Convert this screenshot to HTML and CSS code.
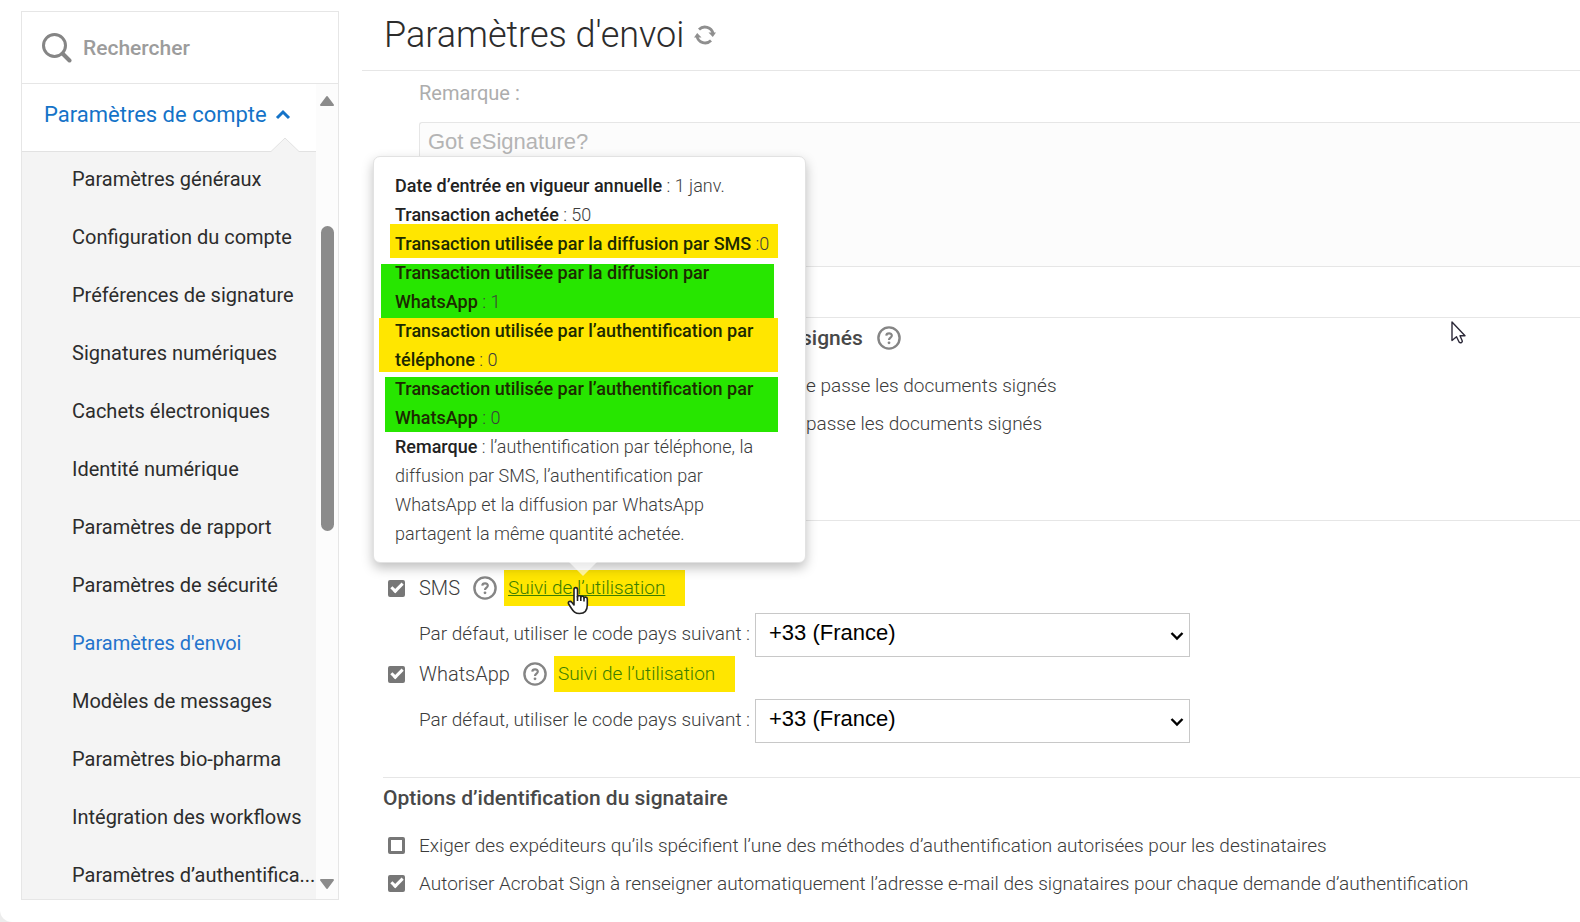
FILE: index.html
```
<!DOCTYPE html>
<html lang="fr">
<head>
    <meta charset="UTF-8">
    <title>Paramètres d'envoi</title>
    <meta name="viewport" content="width=device-width, initial-scale=1.0">
    <link rel="stylesheet" href="styles.css">
</head>
<body>

    <!-- Sidebar -->
    <aside class="sidebar">
        <div class="search">
            <svg class="search-icon" viewBox="0 0 30 30" width="30" height="30">
                <circle cx="12.500" cy="12.500" r="11" fill="none" stroke="#858585" stroke-width="3"/>
                <path d="M20.500 20.500L27.500 27.500" stroke="#858585" stroke-width="4" stroke-linecap="round"/>
            </svg>
            <input type="search" aria-label="Rechercher" placeholder="Rechercher">
        </div>
        <div class="menu">
            <nav class="menu-list">
                <button type="button" class="menu-head">
                    Paramètres de compte
                    <svg viewBox="0 0 16 11" width="16" height="11">
                        <path d="M2 9L8 3L14 9" fill="none" stroke="#1473c8" stroke-width="3"/>
                    </svg>
                    <svg class="notch" viewBox="0 0 28 16" width="28" height="16">
                        <path d="M0 14.500L14 1L28 14.500V16H0Z" fill="#f4f4f4"/>
                        <path d="M0 14.500L14 1L28 14.500" fill="none" stroke="#e2e2e2"/>
                    </svg>
                </button>
                <ul>
                    <li><a href="#">Paramètres généraux</a></li>
                    <li><a href="#">Configuration du compte</a></li>
                    <li><a href="#">Préférences de signature</a></li>
                    <li><a href="#">Signatures numériques</a></li>
                    <li><a href="#">Cachets électroniques</a></li>
                    <li><a href="#">Identité numérique</a></li>
                    <li><a href="#">Paramètres de rapport</a></li>
                    <li><a href="#">Paramètres de sécurité</a></li>
                    <li><a href="#" class="active">Paramètres d'envoi</a></li>
                    <li><a href="#">Modèles de messages</a></li>
                    <li><a href="#">Paramètres bio-pharma</a></li>
                    <li><a href="#">Intégration des workflows</a></li>
                    <li><a href="#">Paramètres d’authentifica...</a></li>
                </ul>
            </nav>
            <div class="scrollbar">
                <svg viewBox="0 0 16 12" width="16" height="12">
                    <path d="M8 2L14 10H2Z" fill="#8b8b8b" stroke="#8b8b8b" stroke-width="2" stroke-linejoin="round"/>
                </svg>
                <div class="track-top"></div>
                <div class="thumb"></div>
                <div class="track-bottom"></div>
                <svg viewBox="0 0 16 12" width="16" height="12">
                    <path d="M8 10L14 2H2Z" fill="#8b8b8b" stroke="#8b8b8b" stroke-width="2" stroke-linejoin="round"/>
                </svg>
            </div>
        </div>
    </aside>

    <!-- Main settings -->
    <main class="content">
        <header class="page-head">
            <h1>Paramètres d'envoi</h1>
            <button type="button" class="refresh" aria-label="Actualiser">
                <svg viewBox="0 0 22 22" width="22" height="22">
                    <path d="M5 5.500A8.300 8.300 0 0 1 19 9.500M17 16.500A8.300 8.300 0 0 1 3 12.500" fill="none" stroke="#8f8f8f" stroke-width="2.800"/>
                    <path d="M14.500 8.500H22L18.800 13Z M7.500 13.500H0L3.200 9Z" fill="#8f8f8f"/>
                </svg>
            </button>
        </header>

        <section class="note">
            <label for="note-text">Remarque :</label>
            <textarea id="note-text" disabled>Got eSignature?</textarea>
        </section>

        <section class="section protect">
            <h2>signés
                <svg class="help" viewBox="0 0 24 24" width="24" height="24">
                    <circle cx="12" cy="12" r="10.600" fill="none" stroke="#858585" stroke-width="2.400"/>
                    <path d="M9.300 9.600C9.400 6.500 14.900 6.500 14.800 9.700C14.700 11.500 12 11.700 12 14" fill="none" stroke="#858585" stroke-width="2.200"/>
                    <circle cx="12" cy="16.800" r="1.400" fill="#858585"/>
                </svg>
            </h2>
            <p class="row">e passe les documents signés</p>
            <p class="row">passe les documents signés</p>
        </section>

        <section class="section delivery">
            <div class="channel">
                <input type="checkbox" id="sms" checked>
                <label for="sms">SMS</label>
                <svg class="help" viewBox="0 0 24 24" width="24" height="24">
                    <circle cx="12" cy="12" r="10.600" fill="none" stroke="#858585" stroke-width="2.400"/>
                    <path d="M9.300 9.600C9.400 6.500 14.900 6.500 14.800 9.700C14.700 11.500 12 11.700 12 14" fill="none" stroke="#858585" stroke-width="2.200"/>
                    <circle cx="12" cy="16.800" r="1.400" fill="#858585"/>
                </svg>
                <div class="usage">
                    <a href="#" class="usage-link hover">Suivi de l’utilisation</a>
                    <svg class="hand" viewBox="0 0 22 29" width="22" height="29">
                        <path d="M7 17V3.500C7 1 10.500 1 10.500 3.500V11C10.500 9 13.800 9 13.800 11.300C13.800 9.700 17 9.700 17 12C17 10.600 20.300 10.800 20.300 13V19C20.300 24 18 27.500 12.500 27.500C8 27.500 6.500 25.500 4.500 22.500L1.500 17.800C0.500 15.500 3.500 14.500 4.800 16.300L7 19Z" fill="#fff" stroke="#222" stroke-width="1.600" stroke-linejoin="round"/>
                        <path d="M10.500 10V15M13.800 11V15M17 12V15.500" stroke="#222" stroke-width="1.600"/>
                    </svg>
                    <div class="tooltip" role="tooltip">
                        <p><b>Date d’entrée en vigueur annuelle</b> : 1 janv.</p>
                        <p><b>Transaction achetée</b> : 50</p>
                        <p class="mark yellow first"><b>Transaction utilisée par la diffusion par SMS</b> :0</p>
                        <p class="mark green"><b>Transaction utilisée par la diffusion par<br>WhatsApp</b> : 1</p>
                        <p class="mark yellow"><b>Transaction utilisée par l’authentification par<br>téléphone</b> : 0</p>
                        <p class="mark green last"><b>Transaction utilisée par l’authentification par<br>WhatsApp</b> : 0</p>
                        <p><b>Remarque</b> : l’authentification par téléphone, la<br>diffusion par SMS, l’authentification par<br>WhatsApp et la diffusion par WhatsApp<br>partagent la même quantité achetée.</p>
                    </div>
                </div>
            </div>
            <div class="country">
                <label for="sms-code">Par défaut, utiliser le code pays suivant :</label>
                <div class="select">
                    <select id="sms-code"><option>+33 (France)</option></select>
                    <svg viewBox="0 0 14 10" width="14" height="10"><path d="M1.500 2L7 7.500L12.500 2" fill="none" stroke="#000" stroke-width="2.400"/></svg>
                </div>
            </div>
            <div class="channel">
                <input type="checkbox" id="whatsapp" checked>
                <label for="whatsapp">WhatsApp</label>
                <svg class="help" viewBox="0 0 24 24" width="24" height="24">
                    <circle cx="12" cy="12" r="10.600" fill="none" stroke="#858585" stroke-width="2.400"/>
                    <path d="M9.300 9.600C9.400 6.500 14.900 6.500 14.800 9.700C14.700 11.500 12 11.700 12 14" fill="none" stroke="#858585" stroke-width="2.200"/>
                    <circle cx="12" cy="16.800" r="1.400" fill="#858585"/>
                </svg>
                <div class="usage">
                    <a href="#" class="usage-link">Suivi de l’utilisation</a>
                </div>
            </div>
            <div class="country">
                <label for="whatsapp-code">Par défaut, utiliser le code pays suivant :</label>
                <div class="select">
                    <select id="whatsapp-code"><option>+33 (France)</option></select>
                    <svg viewBox="0 0 14 10" width="14" height="10"><path d="M1.500 2L7 7.500L12.500 2" fill="none" stroke="#000" stroke-width="2.400"/></svg>
                </div>
            </div>
        </section>

        <section class="section">
            <h2>Options d’identification du signataire</h2>
            <div class="row">
                <input type="checkbox" id="require">
                <label for="require">Exiger des expéditeurs qu’ils spécifient l’une des méthodes d’authentification autorisées pour les destinataires</label>
            </div>
            <div class="row">
                <input type="checkbox" id="autofill" checked>
                <label for="autofill">Autoriser Acrobat Sign à renseigner automatiquement l’adresse e-mail des signataires pour chaque demande d’authentification</label>
            </div>
        </section>

        <svg class="pointer" viewBox="0 0 15 23" width="15" height="23">
            <path d="M1 1V19.500L5.500 15.800L8.200 21.200C9.500 22.500 11.800 21.300 11.200 19.700L9 14.800H14Z" fill="#fff" stroke="#2b2838" stroke-width="1.400" stroke-linejoin="round"/>
        </svg>
    </main>

</body>
</html>
```
FILE: styles.css
```
/* General Styles */
*, *::after {
    box-sizing: border-box;
}

html {
    background-color: #ececec;
}

body {
    margin: 0;
    height: 100vh;
    display: flex;
    overflow: hidden;
    background-color: white;
    border-bottom-left-radius: 12px;
    font-family: Roboto, "Open Sans", sans-serif;
    font-size: 19px;
    font-weight: 300;
    color: #3c3c3c;
}

h1, h2, p, ul {
    margin: 0;
    padding: 0;
    font-weight: inherit;
}

a {
    text-decoration: none;
}

button {
    padding: 0;
    border: none;
    background: none;
    font-family: inherit;
    cursor: pointer;
}

svg {
    display: block;
    flex: none;
}

/* Sidebar */
.sidebar {
    flex: none;
    display: flex;
    flex-direction: column;
    width: 318px;
    margin: 11px 23px 22px 21px;
    border: 1px solid #e6e6e6;
}

.search {
    flex: none;
    display: flex;
    align-items: center;
    gap: 11px;
    height: 72px;
    padding: 0 20px;
    border-bottom: 1px solid #e6e6e6;
}

.search input {
    flex: 1;
    min-width: 0;
    padding: 0;
    border: none;
    outline: none;
    font-family: inherit;
    font-size: 21px;
    font-weight: 500;
}

.search input::placeholder {
    color: #9c9c9c;
}

.menu {
    flex: 1;
    min-height: 0;
    display: flex;
}

.menu-list {
    flex: 1;
    overflow: hidden;
    background-color: #f4f4f4;
}

.menu-head {
    position: relative;
    display: flex;
    align-items: center;
    gap: 8px;
    width: 100%;
    height: 68px;
    padding: 0 0 6px 22px;
    border-bottom: 1px solid #e2e2e2;
    background-color: white;
    color: #1473c8;
    font-size: 22px;
    font-weight: 400;
}

.notch {
    position: absolute;
    right: 17px;
    bottom: -2px;
}

.menu-list ul {
    list-style: none;
}

.menu-list a {
    display: block;
    padding: 0 0 4px 50px;
    line-height: 54px;
    font-size: 20px;
    font-weight: 400;
    white-space: nowrap;
    color: #2c2c2c;
}

.menu-list a.active {
    color: #2473cc;
}

.scrollbar {
    flex: none;
    display: flex;
    flex-direction: column;
    align-items: center;
    width: 22px;
    padding: 11px 0 9px;
    background-color: #fcfcfc;
}

.track-top {
    flex: 119;
}

.thumb {
    flex: 304;
    width: 13px;
    border-radius: 7px;
    background-color: #8b8b8b;
}

.track-bottom {
    flex: 347;
}

/* Main column */
.content {
    position: relative;
    flex: 1;
    min-width: 0;
}

.page-head {
    display: flex;
    align-items: center;
    gap: 10px;
    height: 71px;
    padding-left: 22px;
    border-bottom: 1px solid #e6e6e6;
}

h1 {
    font-size: 36px;
    color: #2c2c2c;
}

.note {
    padding: 10px 0 50px 57px;
    color: #adadad;
}

.note label {
    display: block;
    margin-bottom: 17px;
    line-height: 24px;
    font-size: 20px;
    font-weight: 400;
}

.note textarea {
    display: block;
    width: 100%;
    height: 145px;
    padding: 6px 8px;
    border: 1px solid #e6e6e6;
    border-right: none;
    border-radius: 3px 0 0 3px;
    background-color: #fcfcfc;
    color: #b4b4b4;
    font-family: "Liberation Sans", Arial, sans-serif;
    font-size: 22px;
    resize: none;
}

.section {
    margin-left: 21px;
    padding-top: 6px;
    border-top: 1px solid #e6e6e6;
}

h2 {
    display: flex;
    align-items: center;
    gap: 14px;
    margin-bottom: 14px;
    line-height: 28px;
    font-size: 21px;
    font-weight: 500;
    color: #484848;
}

.row {
    display: flex;
    align-items: center;
    gap: 14px;
    height: 38px;
    padding-left: 5px;
}

.protect {
    padding-bottom: 78px;
    padding-left: 418px;
}

/* Checkboxes */
input[type="checkbox"] {
    appearance: none;
    flex: none;
    width: 17px;
    height: 17px;
    margin: 0;
    border: 3px solid #777;
    border-radius: 2px;
    background-color: white;
}

input[type="checkbox"]:checked {
    background-color: #777;
}

input[type="checkbox"]:checked::after {
    content: "";
    display: block;
    width: 12px;
    height: 7px;
    border-left: 3px solid white;
    border-bottom: 3px solid white;
    transform: rotate(-45deg);
}

/* SMS and WhatsApp delivery */
.delivery {
    padding-top: 50px;
    padding-bottom: 34px;
}

.channel {
    display: flex;
    align-items: center;
    height: 34px;
    padding-left: 5px;
}

.channel label {
    margin: 0 13px 0 14px;
    font-size: 20px;
}

.usage {
    position: relative;
    margin-left: 7px;
}

.usage-link {
    display: block;
    padding: 0 20px 0 4px;
    line-height: 36px;
    background-color: #ffe600;
    color: #3c7d00;
}

.usage-link.hover {
    text-decoration: underline;
}

.hand {
    position: absolute;
    left: 63px;
    top: 16px;
}

.country {
    display: flex;
    align-items: center;
    margin-top: 8px;
    padding-left: 36px;
}

.country label {
    width: 336px;
    padding-bottom: 4px;
    white-space: nowrap;
}

.select {
    position: relative;
    flex: 0 1 435px;
}

.select select {
    appearance: none;
    display: block;
    width: 100%;
    height: 44px;
    padding: 0 13px 6px;
    border: 1px solid #c8c8c8;
    border-radius: 0;
    background-color: white;
    color: black;
    font-family: "Liberation Sans", Arial, sans-serif;
    font-size: 22px;
}

.select svg {
    position: absolute;
    right: 6px;
    top: 18px;
    pointer-events: none;
}

/* Usage tooltip */
.tooltip {
    position: absolute;
    left: -131px;
    bottom: 43px;
    z-index: 1;
    width: 433px;
    padding: 14px 21px;
    border: 1px solid #e2e2e2;
    border-radius: 7px;
    background-color: white;
    box-shadow: 0 5px 12px rgba(0, 0, 0, 0.25);
    font-size: 18px;
    line-height: 29px;
    white-space: nowrap;
}

.tooltip::after {
    content: "";
    position: absolute;
    left: 195px;
    top: 100%;
    border: 14px solid transparent;
    border-top-color: rgba(255, 255, 255, 0.6);
    border-bottom: none;
}

.tooltip b {
    font-weight: 500;
    color: #222;
}

.mark {
    position: relative;
    z-index: 1;
}

.mark::before {
    content: "";
    position: absolute;
    inset: 2px 6px 2px -16px;
    z-index: -1;
}

.yellow::before {
    background-color: #ffe600;
}

.green::before {
    inset: 6px 10px -2px -14px;
    background-color: #27e600;
}

.first::before {
    inset: -5px 6px 0 -5px;
}

.last::before {
    inset: 3px 6px 0 -10px;
}

.mark b {
    color: #1c2a00;
}

/* Mouse pointer */
.pointer {
    position: absolute;
    right: 114px;
    top: 321px;
}
```
